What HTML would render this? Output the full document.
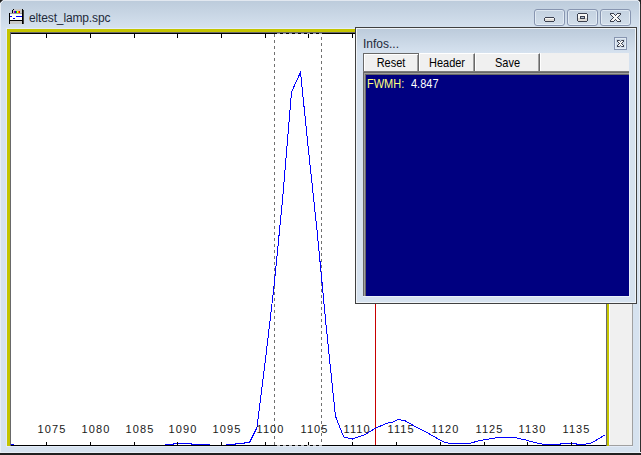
<!DOCTYPE html>
<html><head><meta charset="utf-8">
<style>
html,body{margin:0;padding:0;}
body{width:641px;height:455px;overflow:hidden;position:relative;background:#d6e2ef;font-family:"Liberation Sans",sans-serif;}
.a{position:absolute;}
.bt{display:inline-block;transform:scaleY(1.12);transform-origin:50% 0;}
.lbl{position:absolute;top:422px;font-size:11px;letter-spacing:1.1px;line-height:14px;color:#1a1a1a;white-space:nowrap;}
.btn{position:absolute;top:53px;height:18px;box-sizing:border-box;background:#f0f0f0;font-size:11px;line-height:17px;text-align:center;color:#000;
 border-top:1px solid #fff;border-left:1px solid #fff;border-right:1px solid #696969;border-bottom:0;box-shadow:inset -1px 0 0 #a0a0a0;}
</style></head><body>
<!-- window frame -->
<div class="a" style="left:0;top:0;width:641px;height:29px;background:linear-gradient(#bccbdb,#d6e2ef);"></div>
<div class="a" style="left:0;top:0;width:641px;height:1px;background:#e2e8f0;"></div>
<div class="a" style="left:0;top:0;width:1px;height:455px;background:#e8eef5;"></div>
<div class="a" style="left:639px;top:0;width:1px;height:455px;background:#e8eef5;"></div>
<div class="a" style="left:640px;top:0;width:1px;height:455px;background:#303030;"></div>
<div class="a" style="left:0;top:452px;width:641px;height:1px;background:#e8eef5;"></div>
<div class="a" style="left:0;top:453px;width:641px;height:2px;background:#202020;"></div>
<svg class="a" style="left:0;top:0" width="641" height="6" viewBox="0 0 641 6" shape-rendering="crispEdges"><rect x="0" y="0" width="1" height="1" fill="#202020"/><rect x="1" y="0" width="1" height="1" fill="#202020"/><rect x="2" y="0" width="1" height="1" fill="#787c84"/><rect x="0" y="1" width="1" height="1" fill="#202020"/><rect x="1" y="1" width="1" height="1" fill="#787c84"/><rect x="2" y="1" width="1" height="1" fill="#eef2f7"/><rect x="0" y="2" width="1" height="1" fill="#787c84"/><rect x="1" y="2" width="1" height="1" fill="#eef2f7"/><rect x="638" y="0" width="1" height="1" fill="#787c84"/><rect x="639" y="0" width="1" height="1" fill="#202020"/><rect x="640" y="0" width="1" height="1" fill="#202020"/><rect x="638" y="1" width="1" height="1" fill="#eef2f7"/><rect x="639" y="1" width="1" height="1" fill="#787c84"/><rect x="640" y="1" width="1" height="1" fill="#202020"/><rect x="639" y="2" width="1" height="1" fill="#eef2f7"/><rect x="640" y="2" width="1" height="1" fill="#202020"/><rect x="639" y="3" width="1" height="1" fill="#eef2f7"/><rect x="640" y="3" width="1" height="1" fill="#202020"/></svg>

<!-- icon -->
<svg class="a" style="left:9px;top:9px" width="15" height="15" viewBox="0 0 15 15" shape-rendering="crispEdges">
 <rect x="4" y="0" width="9" height="5" fill="#c8c8c8"/>
 <rect x="4" y="0" width="1" height="1" fill="#000"/>
 <rect x="3" y="1" width="1" height="3" fill="#000"/>
 <rect x="5" y="2" width="1" height="2" fill="#a000a0"/>
 <rect x="6" y="2" width="1" height="2" fill="#0000ff"/>
 <rect x="7" y="2" width="1" height="2" fill="#00c000"/>
 <rect x="8" y="2" width="1" height="2" fill="#ffff00"/>
 <rect x="9" y="2" width="1" height="2" fill="#ff8000"/>
 <rect x="10" y="2" width="1" height="2" fill="#ff0000"/>
 <rect x="1" y="5" width="12" height="6" fill="#fff"/>
 <rect x="1" y="4" width="12" height="1" fill="#a0a0a0"/>
 <rect x="1" y="7" width="2" height="1" fill="#0000ff"/>
 <rect x="7" y="7" width="6" height="1" fill="#0000ff"/>
 <rect x="4" y="9" width="2" height="1" fill="#0000ff"/>
 <rect x="1" y="11" width="12" height="1" fill="#000"/>
 <rect x="1" y="12" width="12" height="3" fill="#c8c8c8"/>
 <rect x="0" y="4" width="1" height="11" fill="#000"/>
 <rect x="13" y="0" width="1" height="15" fill="#000"/>
 <rect x="14" y="1" width="1" height="14" fill="#404040"/>
</svg>
<div class="a" style="left:29px;top:10px;font-size:12px;line-height:16px;color:#1e2a3a;letter-spacing:-0.14px;white-space:nowrap;">eltest_lamp.spc</div>

<!-- title buttons -->
<div class="a" style="left:534px;top:9px;width:31px;height:17px;box-sizing:border-box;border:1px solid #8795b0;border-radius:3px;background:linear-gradient(#c3d1e0,#d2deea);box-shadow:inset 0 0 0 1px rgba(235,242,250,0.7);"></div>
<div class="a" style="left:567px;top:9px;width:31px;height:17px;box-sizing:border-box;border:1px solid #8795b0;border-radius:3px;background:linear-gradient(#c3d1e0,#d2deea);box-shadow:inset 0 0 0 1px rgba(235,242,250,0.7);"></div>
<div class="a" style="left:600px;top:9px;width:31px;height:17px;box-sizing:border-box;border:1px solid #8795b0;border-radius:3px;background:linear-gradient(#c3d1e0,#d2deea);box-shadow:inset 0 0 0 1px rgba(235,242,250,0.7);"></div>
<svg class="a" style="left:0;top:0" width="641" height="60" viewBox="0 0 641 60" shape-rendering="crispEdges"><rect x="545" y="17" width="1" height="1" fill="#3c4150"/><rect x="546" y="17" width="1" height="1" fill="#3c4150"/><rect x="547" y="17" width="1" height="1" fill="#3c4150"/><rect x="548" y="17" width="1" height="1" fill="#3c4150"/><rect x="549" y="17" width="1" height="1" fill="#3c4150"/><rect x="550" y="17" width="1" height="1" fill="#3c4150"/><rect x="551" y="17" width="1" height="1" fill="#3c4150"/><rect x="552" y="17" width="1" height="1" fill="#3c4150"/><rect x="553" y="17" width="1" height="1" fill="#3c4150"/><rect x="544" y="18" width="1" height="1" fill="#3c4150"/><rect x="545" y="18" width="1" height="1" fill="#f8f8f6"/><rect x="546" y="18" width="1" height="1" fill="#f8f8f6"/><rect x="547" y="18" width="1" height="1" fill="#f8f8f6"/><rect x="548" y="18" width="1" height="1" fill="#f8f8f6"/><rect x="549" y="18" width="1" height="1" fill="#f8f8f6"/><rect x="550" y="18" width="1" height="1" fill="#f8f8f6"/><rect x="551" y="18" width="1" height="1" fill="#f8f8f6"/><rect x="552" y="18" width="1" height="1" fill="#f8f8f6"/><rect x="553" y="18" width="1" height="1" fill="#f8f8f6"/><rect x="554" y="18" width="1" height="1" fill="#3c4150"/><rect x="544" y="19" width="1" height="1" fill="#3c4150"/><rect x="545" y="19" width="1" height="1" fill="#dedcd8"/><rect x="546" y="19" width="1" height="1" fill="#dedcd8"/><rect x="547" y="19" width="1" height="1" fill="#dedcd8"/><rect x="548" y="19" width="1" height="1" fill="#dedcd8"/><rect x="549" y="19" width="1" height="1" fill="#dedcd8"/><rect x="550" y="19" width="1" height="1" fill="#dedcd8"/><rect x="551" y="19" width="1" height="1" fill="#dedcd8"/><rect x="552" y="19" width="1" height="1" fill="#dedcd8"/><rect x="553" y="19" width="1" height="1" fill="#dedcd8"/><rect x="554" y="19" width="1" height="1" fill="#3c4150"/><rect x="544" y="20" width="1" height="1" fill="#3c4150"/><rect x="545" y="20" width="1" height="1" fill="#dedcd8"/><rect x="546" y="20" width="1" height="1" fill="#dedcd8"/><rect x="547" y="20" width="1" height="1" fill="#dedcd8"/><rect x="548" y="20" width="1" height="1" fill="#dedcd8"/><rect x="549" y="20" width="1" height="1" fill="#dedcd8"/><rect x="550" y="20" width="1" height="1" fill="#dedcd8"/><rect x="551" y="20" width="1" height="1" fill="#dedcd8"/><rect x="552" y="20" width="1" height="1" fill="#dedcd8"/><rect x="553" y="20" width="1" height="1" fill="#dedcd8"/><rect x="554" y="20" width="1" height="1" fill="#3c4150"/><rect x="545" y="21" width="1" height="1" fill="#3c4150"/><rect x="546" y="21" width="1" height="1" fill="#3c4150"/><rect x="547" y="21" width="1" height="1" fill="#3c4150"/><rect x="548" y="21" width="1" height="1" fill="#3c4150"/><rect x="549" y="21" width="1" height="1" fill="#3c4150"/><rect x="550" y="21" width="1" height="1" fill="#3c4150"/><rect x="551" y="21" width="1" height="1" fill="#3c4150"/><rect x="552" y="21" width="1" height="1" fill="#3c4150"/><rect x="553" y="21" width="1" height="1" fill="#3c4150"/><rect x="578" y="13" width="1" height="1" fill="#3c4150"/><rect x="579" y="13" width="1" height="1" fill="#3c4150"/><rect x="580" y="13" width="1" height="1" fill="#3c4150"/><rect x="581" y="13" width="1" height="1" fill="#3c4150"/><rect x="582" y="13" width="1" height="1" fill="#3c4150"/><rect x="583" y="13" width="1" height="1" fill="#3c4150"/><rect x="584" y="13" width="1" height="1" fill="#3c4150"/><rect x="585" y="13" width="1" height="1" fill="#3c4150"/><rect x="586" y="13" width="1" height="1" fill="#3c4150"/><rect x="577" y="14" width="1" height="1" fill="#3c4150"/><rect x="578" y="14" width="1" height="1" fill="#f8f8f6"/><rect x="579" y="14" width="1" height="1" fill="#f8f8f6"/><rect x="580" y="14" width="1" height="1" fill="#f8f8f6"/><rect x="581" y="14" width="1" height="1" fill="#f8f8f6"/><rect x="582" y="14" width="1" height="1" fill="#f8f8f6"/><rect x="583" y="14" width="1" height="1" fill="#f8f8f6"/><rect x="584" y="14" width="1" height="1" fill="#f8f8f6"/><rect x="585" y="14" width="1" height="1" fill="#f8f8f6"/><rect x="586" y="14" width="1" height="1" fill="#f8f8f6"/><rect x="587" y="14" width="1" height="1" fill="#3c4150"/><rect x="577" y="15" width="1" height="1" fill="#3c4150"/><rect x="578" y="15" width="1" height="1" fill="#f8f8f6"/><rect x="579" y="15" width="1" height="1" fill="#f8f8f6"/><rect x="580" y="15" width="1" height="1" fill="#f8f8f6"/><rect x="581" y="15" width="1" height="1" fill="#f8f8f6"/><rect x="582" y="15" width="1" height="1" fill="#f8f8f6"/><rect x="583" y="15" width="1" height="1" fill="#f8f8f6"/><rect x="584" y="15" width="1" height="1" fill="#f8f8f6"/><rect x="585" y="15" width="1" height="1" fill="#f8f8f6"/><rect x="586" y="15" width="1" height="1" fill="#f8f8f6"/><rect x="587" y="15" width="1" height="1" fill="#3c4150"/><rect x="577" y="16" width="1" height="1" fill="#3c4150"/><rect x="578" y="16" width="1" height="1" fill="#f8f8f6"/><rect x="579" y="16" width="1" height="1" fill="#f8f8f6"/><rect x="580" y="16" width="1" height="1" fill="#3c4150"/><rect x="581" y="16" width="1" height="1" fill="#3c4150"/><rect x="582" y="16" width="1" height="1" fill="#3c4150"/><rect x="583" y="16" width="1" height="1" fill="#3c4150"/><rect x="584" y="16" width="1" height="1" fill="#3c4150"/><rect x="585" y="16" width="1" height="1" fill="#f8f8f6"/><rect x="586" y="16" width="1" height="1" fill="#f8f8f6"/><rect x="587" y="16" width="1" height="1" fill="#3c4150"/><rect x="577" y="17" width="1" height="1" fill="#3c4150"/><rect x="578" y="17" width="1" height="1" fill="#f8f8f6"/><rect x="579" y="17" width="1" height="1" fill="#f8f8f6"/><rect x="580" y="17" width="1" height="1" fill="#3c4150"/><rect x="581" y="17" width="1" height="1" fill="#b8c4d4"/><rect x="582" y="17" width="1" height="1" fill="#b8c4d4"/><rect x="583" y="17" width="1" height="1" fill="#b8c4d4"/><rect x="584" y="17" width="1" height="1" fill="#3c4150"/><rect x="585" y="17" width="1" height="1" fill="#f8f8f6"/><rect x="586" y="17" width="1" height="1" fill="#f8f8f6"/><rect x="587" y="17" width="1" height="1" fill="#3c4150"/><rect x="577" y="18" width="1" height="1" fill="#3c4150"/><rect x="578" y="18" width="1" height="1" fill="#dedcd8"/><rect x="579" y="18" width="1" height="1" fill="#dedcd8"/><rect x="580" y="18" width="1" height="1" fill="#3c4150"/><rect x="581" y="18" width="1" height="1" fill="#3c4150"/><rect x="582" y="18" width="1" height="1" fill="#3c4150"/><rect x="583" y="18" width="1" height="1" fill="#3c4150"/><rect x="584" y="18" width="1" height="1" fill="#3c4150"/><rect x="585" y="18" width="1" height="1" fill="#dedcd8"/><rect x="586" y="18" width="1" height="1" fill="#dedcd8"/><rect x="587" y="18" width="1" height="1" fill="#3c4150"/><rect x="577" y="19" width="1" height="1" fill="#3c4150"/><rect x="578" y="19" width="1" height="1" fill="#dedcd8"/><rect x="579" y="19" width="1" height="1" fill="#dedcd8"/><rect x="580" y="19" width="1" height="1" fill="#dedcd8"/><rect x="581" y="19" width="1" height="1" fill="#dedcd8"/><rect x="582" y="19" width="1" height="1" fill="#dedcd8"/><rect x="583" y="19" width="1" height="1" fill="#dedcd8"/><rect x="584" y="19" width="1" height="1" fill="#dedcd8"/><rect x="585" y="19" width="1" height="1" fill="#dedcd8"/><rect x="586" y="19" width="1" height="1" fill="#dedcd8"/><rect x="587" y="19" width="1" height="1" fill="#3c4150"/><rect x="577" y="20" width="1" height="1" fill="#3c4150"/><rect x="578" y="20" width="1" height="1" fill="#dedcd8"/><rect x="579" y="20" width="1" height="1" fill="#dedcd8"/><rect x="580" y="20" width="1" height="1" fill="#dedcd8"/><rect x="581" y="20" width="1" height="1" fill="#dedcd8"/><rect x="582" y="20" width="1" height="1" fill="#dedcd8"/><rect x="583" y="20" width="1" height="1" fill="#dedcd8"/><rect x="584" y="20" width="1" height="1" fill="#dedcd8"/><rect x="585" y="20" width="1" height="1" fill="#dedcd8"/><rect x="586" y="20" width="1" height="1" fill="#dedcd8"/><rect x="587" y="20" width="1" height="1" fill="#3c4150"/><rect x="578" y="21" width="1" height="1" fill="#3c4150"/><rect x="579" y="21" width="1" height="1" fill="#3c4150"/><rect x="580" y="21" width="1" height="1" fill="#3c4150"/><rect x="581" y="21" width="1" height="1" fill="#3c4150"/><rect x="582" y="21" width="1" height="1" fill="#3c4150"/><rect x="583" y="21" width="1" height="1" fill="#3c4150"/><rect x="584" y="21" width="1" height="1" fill="#3c4150"/><rect x="585" y="21" width="1" height="1" fill="#3c4150"/><rect x="586" y="21" width="1" height="1" fill="#3c4150"/><rect x="610" y="13" width="1" height="1" fill="#3c4150"/><rect x="611" y="13" width="1" height="1" fill="#3c4150"/><rect x="612" y="13" width="1" height="1" fill="#3c4150"/><rect x="613" y="13" width="1" height="1" fill="#3c4150"/><rect x="617" y="13" width="1" height="1" fill="#3c4150"/><rect x="618" y="13" width="1" height="1" fill="#3c4150"/><rect x="619" y="13" width="1" height="1" fill="#3c4150"/><rect x="620" y="13" width="1" height="1" fill="#3c4150"/><rect x="610" y="14" width="1" height="1" fill="#3c4150"/><rect x="611" y="14" width="1" height="1" fill="#f8f8f6"/><rect x="612" y="14" width="1" height="1" fill="#f8f8f6"/><rect x="613" y="14" width="1" height="1" fill="#f8f8f6"/><rect x="614" y="14" width="1" height="1" fill="#3c4150"/><rect x="616" y="14" width="1" height="1" fill="#3c4150"/><rect x="617" y="14" width="1" height="1" fill="#f8f8f6"/><rect x="618" y="14" width="1" height="1" fill="#f8f8f6"/><rect x="619" y="14" width="1" height="1" fill="#f8f8f6"/><rect x="620" y="14" width="1" height="1" fill="#3c4150"/><rect x="611" y="15" width="1" height="1" fill="#3c4150"/><rect x="612" y="15" width="1" height="1" fill="#f8f8f6"/><rect x="613" y="15" width="1" height="1" fill="#f8f8f6"/><rect x="614" y="15" width="1" height="1" fill="#f8f8f6"/><rect x="615" y="15" width="1" height="1" fill="#3c4150"/><rect x="616" y="15" width="1" height="1" fill="#f8f8f6"/><rect x="617" y="15" width="1" height="1" fill="#f8f8f6"/><rect x="618" y="15" width="1" height="1" fill="#f8f8f6"/><rect x="619" y="15" width="1" height="1" fill="#3c4150"/><rect x="612" y="16" width="1" height="1" fill="#3c4150"/><rect x="613" y="16" width="1" height="1" fill="#f8f8f6"/><rect x="614" y="16" width="1" height="1" fill="#f8f8f6"/><rect x="615" y="16" width="1" height="1" fill="#f8f8f6"/><rect x="616" y="16" width="1" height="1" fill="#f8f8f6"/><rect x="617" y="16" width="1" height="1" fill="#f8f8f6"/><rect x="618" y="16" width="1" height="1" fill="#3c4150"/><rect x="613" y="17" width="1" height="1" fill="#3c4150"/><rect x="614" y="17" width="1" height="1" fill="#f8f8f6"/><rect x="615" y="17" width="1" height="1" fill="#f8f8f6"/><rect x="616" y="17" width="1" height="1" fill="#f8f8f6"/><rect x="617" y="17" width="1" height="1" fill="#3c4150"/><rect x="612" y="18" width="1" height="1" fill="#3c4150"/><rect x="613" y="18" width="1" height="1" fill="#f8f8f6"/><rect x="614" y="18" width="1" height="1" fill="#f8f8f6"/><rect x="615" y="18" width="1" height="1" fill="#f8f8f6"/><rect x="616" y="18" width="1" height="1" fill="#f8f8f6"/><rect x="617" y="18" width="1" height="1" fill="#f8f8f6"/><rect x="618" y="18" width="1" height="1" fill="#3c4150"/><rect x="611" y="19" width="1" height="1" fill="#3c4150"/><rect x="612" y="19" width="1" height="1" fill="#f8f8f6"/><rect x="613" y="19" width="1" height="1" fill="#f8f8f6"/><rect x="614" y="19" width="1" height="1" fill="#f8f8f6"/><rect x="615" y="19" width="1" height="1" fill="#3c4150"/><rect x="616" y="19" width="1" height="1" fill="#f8f8f6"/><rect x="617" y="19" width="1" height="1" fill="#f8f8f6"/><rect x="618" y="19" width="1" height="1" fill="#f8f8f6"/><rect x="619" y="19" width="1" height="1" fill="#3c4150"/><rect x="610" y="20" width="1" height="1" fill="#3c4150"/><rect x="611" y="20" width="1" height="1" fill="#f8f8f6"/><rect x="612" y="20" width="1" height="1" fill="#f8f8f6"/><rect x="613" y="20" width="1" height="1" fill="#f8f8f6"/><rect x="614" y="20" width="1" height="1" fill="#3c4150"/><rect x="616" y="20" width="1" height="1" fill="#3c4150"/><rect x="617" y="20" width="1" height="1" fill="#f8f8f6"/><rect x="618" y="20" width="1" height="1" fill="#f8f8f6"/><rect x="619" y="20" width="1" height="1" fill="#f8f8f6"/><rect x="620" y="20" width="1" height="1" fill="#3c4150"/><rect x="610" y="21" width="1" height="1" fill="#3c4150"/><rect x="611" y="21" width="1" height="1" fill="#3c4150"/><rect x="612" y="21" width="1" height="1" fill="#3c4150"/><rect x="613" y="21" width="1" height="1" fill="#3c4150"/><rect x="617" y="21" width="1" height="1" fill="#3c4150"/><rect x="618" y="21" width="1" height="1" fill="#3c4150"/><rect x="619" y="21" width="1" height="1" fill="#3c4150"/><rect x="620" y="21" width="1" height="1" fill="#3c4150"/></svg>

<!-- client edges -->
<div class="a" style="left:6px;top:28px;width:627px;height:1px;background:#e4ecf8;"></div>
<div class="a" style="left:6px;top:28px;width:1px;height:419px;background:#e4ecf8;"></div>
<div class="a" style="left:6px;top:446px;width:627px;height:1px;background:#e4ecf8;"></div>

<!-- gray panel right -->
<div class="a" style="left:609px;top:29px;width:23px;height:417px;background:#f0f0f0;"></div>
<div class="a" style="left:609px;top:29px;width:1px;height:416px;background:#fff;"></div>
<div class="a" style="left:632px;top:29px;width:1px;height:417px;background:#a0a0a0;"></div>
<div class="a" style="left:609px;top:445px;width:24px;height:1px;background:#a0a0a0;"></div>

<!-- plot -->
<div class="a" style="left:7px;top:29px;width:602px;height:417px;background:#c4c400;"></div>
<div class="a" style="left:10px;top:32px;width:597px;height:414px;background:#696969;"></div>
<div class="a" style="left:11px;top:33px;width:595px;height:413px;background:#000;"></div>
<div class="a" style="left:11px;top:34px;width:595px;height:412px;background:#fff;"></div>
<svg class="a" style="left:0;top:0" width="641" height="455" viewBox="0 0 641 455" shape-rendering="crispEdges">
 <rect x="274" y="34" width="1" height="3" fill="#707070"/><rect x="274" y="40" width="1" height="3" fill="#707070"/><rect x="274" y="46" width="1" height="3" fill="#707070"/><rect x="274" y="52" width="1" height="3" fill="#707070"/><rect x="274" y="58" width="1" height="3" fill="#707070"/><rect x="274" y="64" width="1" height="3" fill="#707070"/><rect x="274" y="70" width="1" height="3" fill="#707070"/><rect x="274" y="76" width="1" height="3" fill="#707070"/><rect x="274" y="82" width="1" height="3" fill="#707070"/><rect x="274" y="88" width="1" height="3" fill="#707070"/><rect x="274" y="94" width="1" height="3" fill="#707070"/><rect x="274" y="100" width="1" height="3" fill="#707070"/><rect x="274" y="106" width="1" height="3" fill="#707070"/><rect x="274" y="112" width="1" height="3" fill="#707070"/><rect x="274" y="118" width="1" height="3" fill="#707070"/><rect x="274" y="124" width="1" height="3" fill="#707070"/><rect x="274" y="130" width="1" height="3" fill="#707070"/><rect x="274" y="136" width="1" height="3" fill="#707070"/><rect x="274" y="142" width="1" height="3" fill="#707070"/><rect x="274" y="148" width="1" height="3" fill="#707070"/><rect x="274" y="154" width="1" height="3" fill="#707070"/><rect x="274" y="160" width="1" height="3" fill="#707070"/><rect x="274" y="166" width="1" height="3" fill="#707070"/><rect x="274" y="172" width="1" height="3" fill="#707070"/><rect x="274" y="178" width="1" height="3" fill="#707070"/><rect x="274" y="184" width="1" height="3" fill="#707070"/><rect x="274" y="190" width="1" height="3" fill="#707070"/><rect x="274" y="196" width="1" height="3" fill="#707070"/><rect x="274" y="202" width="1" height="3" fill="#707070"/><rect x="274" y="208" width="1" height="3" fill="#707070"/><rect x="274" y="214" width="1" height="3" fill="#707070"/><rect x="274" y="220" width="1" height="3" fill="#707070"/><rect x="274" y="226" width="1" height="3" fill="#707070"/><rect x="274" y="232" width="1" height="3" fill="#707070"/><rect x="274" y="238" width="1" height="3" fill="#707070"/><rect x="274" y="244" width="1" height="3" fill="#707070"/><rect x="274" y="250" width="1" height="3" fill="#707070"/><rect x="274" y="256" width="1" height="3" fill="#707070"/><rect x="274" y="262" width="1" height="3" fill="#707070"/><rect x="274" y="268" width="1" height="3" fill="#707070"/><rect x="274" y="274" width="1" height="3" fill="#707070"/><rect x="274" y="280" width="1" height="3" fill="#707070"/><rect x="274" y="286" width="1" height="3" fill="#707070"/><rect x="274" y="292" width="1" height="3" fill="#707070"/><rect x="274" y="298" width="1" height="3" fill="#707070"/><rect x="274" y="304" width="1" height="3" fill="#707070"/><rect x="274" y="310" width="1" height="3" fill="#707070"/><rect x="274" y="316" width="1" height="3" fill="#707070"/><rect x="274" y="322" width="1" height="3" fill="#707070"/><rect x="274" y="328" width="1" height="3" fill="#707070"/><rect x="274" y="334" width="1" height="3" fill="#707070"/><rect x="274" y="340" width="1" height="3" fill="#707070"/><rect x="274" y="346" width="1" height="3" fill="#707070"/><rect x="274" y="352" width="1" height="3" fill="#707070"/><rect x="274" y="358" width="1" height="3" fill="#707070"/><rect x="274" y="364" width="1" height="3" fill="#707070"/><rect x="274" y="370" width="1" height="3" fill="#707070"/><rect x="274" y="376" width="1" height="3" fill="#707070"/><rect x="274" y="382" width="1" height="3" fill="#707070"/><rect x="274" y="388" width="1" height="3" fill="#707070"/><rect x="274" y="394" width="1" height="3" fill="#707070"/><rect x="274" y="400" width="1" height="3" fill="#707070"/><rect x="274" y="406" width="1" height="3" fill="#707070"/><rect x="274" y="412" width="1" height="3" fill="#707070"/><rect x="274" y="418" width="1" height="3" fill="#707070"/><rect x="274" y="424" width="1" height="3" fill="#707070"/><rect x="274" y="430" width="1" height="3" fill="#707070"/><rect x="274" y="436" width="1" height="3" fill="#707070"/><rect x="274" y="442" width="1" height="3" fill="#707070"/><rect x="321" y="37" width="1" height="3" fill="#707070"/><rect x="321" y="43" width="1" height="3" fill="#707070"/><rect x="321" y="49" width="1" height="3" fill="#707070"/><rect x="321" y="55" width="1" height="3" fill="#707070"/><rect x="321" y="61" width="1" height="3" fill="#707070"/><rect x="321" y="67" width="1" height="3" fill="#707070"/><rect x="321" y="73" width="1" height="3" fill="#707070"/><rect x="321" y="79" width="1" height="3" fill="#707070"/><rect x="321" y="85" width="1" height="3" fill="#707070"/><rect x="321" y="91" width="1" height="3" fill="#707070"/><rect x="321" y="97" width="1" height="3" fill="#707070"/><rect x="321" y="103" width="1" height="3" fill="#707070"/><rect x="321" y="109" width="1" height="3" fill="#707070"/><rect x="321" y="115" width="1" height="3" fill="#707070"/><rect x="321" y="121" width="1" height="3" fill="#707070"/><rect x="321" y="127" width="1" height="3" fill="#707070"/><rect x="321" y="133" width="1" height="3" fill="#707070"/><rect x="321" y="139" width="1" height="3" fill="#707070"/><rect x="321" y="145" width="1" height="3" fill="#707070"/><rect x="321" y="151" width="1" height="3" fill="#707070"/><rect x="321" y="157" width="1" height="3" fill="#707070"/><rect x="321" y="163" width="1" height="3" fill="#707070"/><rect x="321" y="169" width="1" height="3" fill="#707070"/><rect x="321" y="175" width="1" height="3" fill="#707070"/><rect x="321" y="181" width="1" height="3" fill="#707070"/><rect x="321" y="187" width="1" height="3" fill="#707070"/><rect x="321" y="193" width="1" height="3" fill="#707070"/><rect x="321" y="199" width="1" height="3" fill="#707070"/><rect x="321" y="205" width="1" height="3" fill="#707070"/><rect x="321" y="211" width="1" height="3" fill="#707070"/><rect x="321" y="217" width="1" height="3" fill="#707070"/><rect x="321" y="223" width="1" height="3" fill="#707070"/><rect x="321" y="229" width="1" height="3" fill="#707070"/><rect x="321" y="235" width="1" height="3" fill="#707070"/><rect x="321" y="241" width="1" height="3" fill="#707070"/><rect x="321" y="247" width="1" height="3" fill="#707070"/><rect x="321" y="253" width="1" height="3" fill="#707070"/><rect x="321" y="259" width="1" height="3" fill="#707070"/><rect x="321" y="265" width="1" height="3" fill="#707070"/><rect x="321" y="271" width="1" height="3" fill="#707070"/><rect x="321" y="277" width="1" height="3" fill="#707070"/><rect x="321" y="283" width="1" height="3" fill="#707070"/><rect x="321" y="289" width="1" height="3" fill="#707070"/><rect x="321" y="295" width="1" height="3" fill="#707070"/><rect x="321" y="301" width="1" height="3" fill="#707070"/><rect x="321" y="307" width="1" height="3" fill="#707070"/><rect x="321" y="313" width="1" height="3" fill="#707070"/><rect x="321" y="319" width="1" height="3" fill="#707070"/><rect x="321" y="325" width="1" height="3" fill="#707070"/><rect x="321" y="331" width="1" height="3" fill="#707070"/><rect x="321" y="337" width="1" height="3" fill="#707070"/><rect x="321" y="343" width="1" height="3" fill="#707070"/><rect x="321" y="349" width="1" height="3" fill="#707070"/><rect x="321" y="355" width="1" height="3" fill="#707070"/><rect x="321" y="361" width="1" height="3" fill="#707070"/><rect x="321" y="367" width="1" height="3" fill="#707070"/><rect x="321" y="373" width="1" height="3" fill="#707070"/><rect x="321" y="379" width="1" height="3" fill="#707070"/><rect x="321" y="385" width="1" height="3" fill="#707070"/><rect x="321" y="391" width="1" height="3" fill="#707070"/><rect x="321" y="397" width="1" height="3" fill="#707070"/><rect x="321" y="403" width="1" height="3" fill="#707070"/><rect x="321" y="409" width="1" height="3" fill="#707070"/><rect x="321" y="415" width="1" height="3" fill="#707070"/><rect x="321" y="421" width="1" height="3" fill="#707070"/><rect x="321" y="427" width="1" height="3" fill="#707070"/><rect x="321" y="433" width="1" height="3" fill="#707070"/><rect x="321" y="439" width="1" height="3" fill="#707070"/>
 <rect x="375" y="34" width="1" height="411" fill="#c80000"/>
 <polyline points="11.00,444.50 13.50,444.50 14.50,445.50 165.50,445.50 165.50,444.50 173.50,444.50 173.50,443.50 191.50,443.50 191.50,444.50 209.50,444.50 209.50,445.50 226.50,445.50 226.50,444.50 235.50,444.50 235.50,443.50 244.50,443.50 244.50,442.50 249.50,442.50 257.00,427.50 265.25,361.50 274.00,286.50 282.75,197.50 291.50,92.10 300.50,72.10 308.50,150.50 317.25,232.50 326.00,324.50 335.40,416.00 343.70,437.00 352.50,439.00 364.20,435.00 375.30,428.40 386.20,423.40 392.40,422.20 397.90,419.40 404.90,420.60 414.30,426.10 425.20,431.50 436.10,437.80 443.90,442.00 448.60,443.20 469.60,443.40 480.60,440.30 491.50,438.70 497.70,437.60 514.90,437.60 525.80,440.00 534.00,442.40 544.40,444.50 560.50,444.50 560.50,443.50 576.50,443.50 576.50,444.50 585.50,444.50 586.50,443.50 590.50,443.50 597.50,439.50 605.50,434.50" fill="none" stroke="#0000ff" stroke-width="1"/>
 <rect x="11" y="445" width="595" height="1" fill="#000"/>
 <rect x="277" y="33" width="3" height="1" fill="#9898a0"/><rect x="283" y="33" width="3" height="1" fill="#9898a0"/><rect x="289" y="33" width="3" height="1" fill="#9898a0"/><rect x="295" y="33" width="3" height="1" fill="#9898a0"/><rect x="301" y="33" width="3" height="1" fill="#9898a0"/><rect x="307" y="33" width="3" height="1" fill="#9898a0"/><rect x="313" y="33" width="3" height="1" fill="#9898a0"/><rect x="319" y="33" width="3" height="1" fill="#9898a0"/><rect x="277" y="445" width="3" height="1" fill="#b0b0b0"/><rect x="283" y="445" width="3" height="1" fill="#b0b0b0"/><rect x="289" y="445" width="3" height="1" fill="#b0b0b0"/><rect x="295" y="445" width="3" height="1" fill="#b0b0b0"/><rect x="301" y="445" width="3" height="1" fill="#b0b0b0"/><rect x="307" y="445" width="3" height="1" fill="#b0b0b0"/><rect x="313" y="445" width="3" height="1" fill="#b0b0b0"/><rect x="319" y="445" width="3" height="1" fill="#b0b0b0"/>
 <rect x="46" y="34" width="1" height="4" fill="#000"/><rect x="46" y="442" width="1" height="3" fill="#000"/><rect x="90" y="34" width="1" height="4" fill="#000"/><rect x="90" y="442" width="1" height="3" fill="#000"/><rect x="134" y="34" width="1" height="4" fill="#000"/><rect x="134" y="442" width="1" height="3" fill="#000"/><rect x="177" y="34" width="1" height="4" fill="#000"/><rect x="177" y="442" width="1" height="3" fill="#000"/><rect x="221" y="34" width="1" height="4" fill="#000"/><rect x="221" y="442" width="1" height="3" fill="#000"/><rect x="265" y="34" width="1" height="4" fill="#000"/><rect x="265" y="442" width="1" height="3" fill="#000"/><rect x="308" y="34" width="1" height="4" fill="#000"/><rect x="308" y="442" width="1" height="3" fill="#000"/><rect x="352" y="34" width="1" height="4" fill="#000"/><rect x="352" y="442" width="1" height="3" fill="#000"/><rect x="396" y="34" width="1" height="4" fill="#000"/><rect x="396" y="442" width="1" height="3" fill="#000"/><rect x="440" y="34" width="1" height="4" fill="#000"/><rect x="440" y="442" width="1" height="3" fill="#000"/><rect x="484" y="34" width="1" height="4" fill="#000"/><rect x="484" y="442" width="1" height="3" fill="#000"/><rect x="527" y="34" width="1" height="4" fill="#000"/><rect x="527" y="442" width="1" height="3" fill="#000"/><rect x="571" y="34" width="1" height="4" fill="#000"/><rect x="571" y="442" width="1" height="3" fill="#000"/>
</svg>
<div class="lbl" style="left:37.5px">1075</div><div class="lbl" style="left:81.5px">1080</div><div class="lbl" style="left:125.5px">1085</div><div class="lbl" style="left:168.5px">1090</div><div class="lbl" style="left:212.5px">1095</div><div class="lbl" style="left:256.5px">1100</div><div class="lbl" style="left:300.5px">1105</div><div class="lbl" style="left:343.5px">1110</div><div class="lbl" style="left:387.5px">1115</div><div class="lbl" style="left:431.5px">1120</div><div class="lbl" style="left:475.5px">1125</div><div class="lbl" style="left:518.5px">1130</div><div class="lbl" style="left:562.5px">1135</div>

<!-- Infos window -->
<div class="a" style="left:355px;top:27px;width:282px;height:277px;background:#404040;"></div>
<div class="a" style="left:356px;top:28px;width:280px;height:275px;background:#f0f4f8;"></div>
<div class="a" style="left:357px;top:29px;width:278px;height:273px;background:#d6e2ef;"></div>
<div class="a" style="left:357px;top:29px;width:278px;height:24px;background:linear-gradient(#bccbdb,#d6e2ef);"></div>
<div class="a" style="left:363px;top:36px;font-size:12px;line-height:16px;color:#1e2a3a;white-space:nowrap;">Infos...</div>
<div class="a" style="left:614px;top:37px;width:13px;height:13px;box-sizing:border-box;border:1px solid #8795b0;background:linear-gradient(#c8d5e3,#d6e2ef);box-shadow:inset 0 0 0 1px rgba(235,242,250,0.7);"></div>
<svg class="a" style="left:0;top:0" width="641" height="60" viewBox="0 0 641 60" shape-rendering="crispEdges"><rect x="617" y="40" width="1" height="1" fill="#3c4150"/><rect x="618" y="40" width="1" height="1" fill="#3c4150"/><rect x="619" y="40" width="1" height="1" fill="#6a7080"/><rect x="621" y="40" width="1" height="1" fill="#6a7080"/><rect x="622" y="40" width="1" height="1" fill="#3c4150"/><rect x="623" y="40" width="1" height="1" fill="#3c4150"/><rect x="617" y="41" width="1" height="1" fill="#3c4150"/><rect x="618" y="41" width="1" height="1" fill="#f8f8f6"/><rect x="619" y="41" width="1" height="1" fill="#f8f8f6"/><rect x="620" y="41" width="1" height="1" fill="#6a7080"/><rect x="621" y="41" width="1" height="1" fill="#f8f8f6"/><rect x="622" y="41" width="1" height="1" fill="#f8f8f6"/><rect x="623" y="41" width="1" height="1" fill="#3c4150"/><rect x="618" y="42" width="1" height="1" fill="#3c4150"/><rect x="619" y="42" width="1" height="1" fill="#f8f8f6"/><rect x="620" y="42" width="1" height="1" fill="#f8f8f6"/><rect x="621" y="42" width="1" height="1" fill="#f8f8f6"/><rect x="622" y="42" width="1" height="1" fill="#3c4150"/><rect x="619" y="43" width="1" height="1" fill="#3c4150"/><rect x="620" y="43" width="1" height="1" fill="#f8f8f6"/><rect x="621" y="43" width="1" height="1" fill="#3c4150"/><rect x="618" y="44" width="1" height="1" fill="#3c4150"/><rect x="619" y="44" width="1" height="1" fill="#f8f8f6"/><rect x="620" y="44" width="1" height="1" fill="#f8f8f6"/><rect x="621" y="44" width="1" height="1" fill="#f8f8f6"/><rect x="622" y="44" width="1" height="1" fill="#3c4150"/><rect x="617" y="45" width="1" height="1" fill="#3c4150"/><rect x="618" y="45" width="1" height="1" fill="#f8f8f6"/><rect x="619" y="45" width="1" height="1" fill="#f8f8f6"/><rect x="620" y="45" width="1" height="1" fill="#6a7080"/><rect x="621" y="45" width="1" height="1" fill="#f8f8f6"/><rect x="622" y="45" width="1" height="1" fill="#f8f8f6"/><rect x="623" y="45" width="1" height="1" fill="#3c4150"/><rect x="617" y="46" width="1" height="1" fill="#3c4150"/><rect x="618" y="46" width="1" height="1" fill="#3c4150"/><rect x="619" y="46" width="1" height="1" fill="#6a7080"/><rect x="621" y="46" width="1" height="1" fill="#6a7080"/><rect x="622" y="46" width="1" height="1" fill="#3c4150"/><rect x="623" y="46" width="1" height="1" fill="#3c4150"/></svg>
<div class="a" style="left:363px;top:53px;width:266px;height:244px;background:#696969;"></div>
<div class="a" style="left:364px;top:53px;width:265px;height:18px;background:#f0f0f0;"></div>
<div class="a" style="left:363px;top:71px;width:266px;height:1px;background:#7c7c7c;"></div>
<div class="a" style="left:540px;top:53px;width:1px;height:18px;background:#fff;"></div>
<div class="btn" style="left:363px;width:56px;border:1px solid #696969;border-bottom:0;box-shadow:inset 1px 1px 0 #fff, inset -1px 0 0 #a0a0a0;"><span class="bt">Reset</span></div>
<div class="btn" style="left:419px;width:56px;"><span class="bt">Header</span></div>
<div class="btn" style="left:475px;width:65px;"><span class="bt">Save</span></div>
<div class="a" style="left:364px;top:73px;width:265px;height:223px;background:#a0a0a0;"></div>
<div class="a" style="left:365px;top:74px;width:264px;height:222px;background:#696969;"></div>
<div class="a" style="left:366px;top:75px;width:263px;height:221px;background:#000080;"></div>
<div class="a" style="left:629px;top:73px;width:1px;height:224px;background:#eaf1fa;"></div>
<div class="a" style="left:363px;top:296px;width:267px;height:1px;background:#eaf1fa;"></div>
<div class="a" style="left:367px;top:76px;font-size:11px;line-height:14px;color:#ffff80;white-space:pre;transform:scaleY(1.13);transform-origin:0 0;">FWMH:</div>
<div class="a" style="left:411px;top:76px;font-size:11px;line-height:14px;color:#fff;white-space:pre;transform:scaleY(1.13);transform-origin:0 0;">4.847</div>
</body></html>
